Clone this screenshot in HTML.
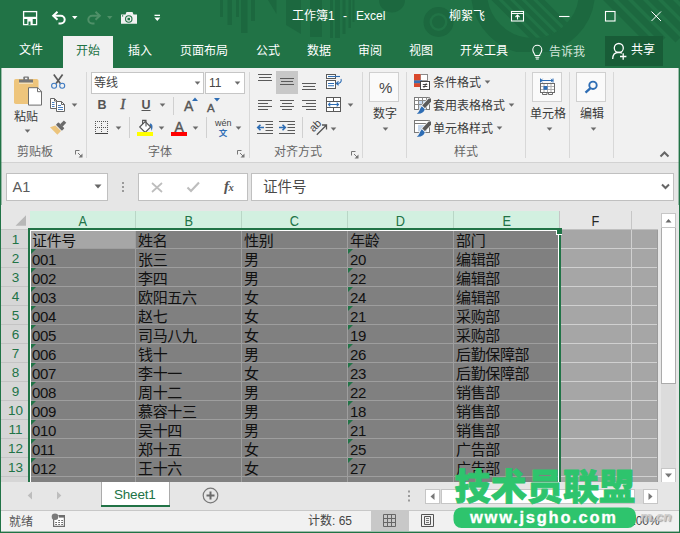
<!DOCTYPE html>
<html lang="zh-CN">
<head>
<meta charset="utf-8">
<title>工作簿1 - Excel</title>
<style>
html,body{margin:0;padding:0}
body{width:680px;height:533px;overflow:hidden;position:relative;background:#e6e6e6;
 font-family:"Liberation Sans","Noto Sans CJK SC",sans-serif;font-size:12px;color:#262626}
.abs{position:absolute}
#win{position:absolute;left:0;top:0;width:680px;height:533px;overflow:hidden}
.tt{position:absolute;color:#fff;font-size:12px;line-height:16px;white-space:nowrap}
.tab{position:absolute;top:36px;height:30px;line-height:28px;color:#fff;font-size:12px;white-space:nowrap}
.ch{font-size:14.500px;line-height:20px;text-align:center}
.ch span{display:inline-block;transform:scaleX(.88)}
.rh span{display:inline-block;transform:translateX(1px)}
.rh{font-size:13.500px;line-height:20px;text-align:center;color:#217346;background:#d6d6d6;overflow:hidden}
.ct{font-size:15px;line-height:19px;white-space:nowrap;color:#111;letter-spacing:-0.35px}
.rl{position:absolute;font-size:12px;line-height:16px;white-space:nowrap;color:#333}
.gl{position:absolute;font-size:12px;line-height:16px;white-space:nowrap;color:#666;text-align:center}
.sep{position:absolute;width:1px;background:#d8d8d8}
</style>
</head>
<body>
<div id="win">
<!-- title bar -->
<div class="abs" style="left:0;top:0;width:680px;height:68px;background:#217346"></div>
<svg class="abs" style="left:0;top:0" width="680" height="66" viewBox="0 0 680 66">
 <defs><clipPath id="tb"><rect x="0" y="0" width="680" height="52"/></clipPath>
 <clipPath id="uin"><circle cx="533" cy="-8" r="46"/></clipPath></defs>
 <g fill="#1c683f">
  <rect x="220" y="0" width="3" height="17"/><rect x="227.500" y="0" width="4.500" height="25"/>
  <rect x="236" y="0" width="3" height="17"/><rect x="241" y="0" width="6.500" height="33"/>
  <rect x="251" y="0" width="4" height="21"/>
  <path d="M268 0h8.500v14z"/>
  <path d="M286 0h15v34l-15-9z"/>
  <rect x="310" y="0" width="12" height="37"/>
  <rect x="330" y="0" width="3" height="38"/><rect x="335" y="0" width="5" height="38"/>
  <rect x="342.500" y="0" width="3" height="34"/><rect x="348.500" y="0" width="2.500" height="28"/><rect x="352.500" y="0" width="2" height="22"/>
  <path d="M379 0a13 12.500 0 0 0 26 0z"/>
 </g>
 <g fill="none" stroke="#1c683f" clip-path="url(#tb)">
  <circle cx="438.500" cy="22" r="6.500" fill="#1c683f" stroke="none"/>
  <circle cx="438.500" cy="22" r="12" stroke-width="6"/>
  <circle cx="533" cy="-8" r="54" stroke-width="16"/>
  <g stroke-width="5" clip-path="url(#uin)">
   <path d="M485 -10L555 60"/><path d="M496.500 -10L566.500 60"/><path d="M508 -10L578 60"/><path d="M519.500 -10L589.500 60"/><path d="M531 -10L601 60"/>
  </g>
  <g stroke-width="7">
   <path d="M600 -8L648 40"/><path d="M615 -8L663 40"/><path d="M630 -8L678 40"/><path d="M645 -8L693 40"/><path d="M660 -8L708 40"/><path d="M675 -8L723 40"/>
  </g>
 </g>
</svg>
<!-- QAT icons -->
<svg class="abs" style="left:0;top:0" width="170" height="36" viewBox="0 0 170 36">
 <rect x="23.600" y="11.600" width="13" height="13" fill="none" stroke="#fff" stroke-width="1.300"/>
 <rect x="24" y="16.800" width="12.500" height="2.200" fill="#fff"/>
 <rect x="27.300" y="19" width="5.400" height="5.500" fill="#fff"/>
 <rect x="28.500" y="21.500" width="2" height="3.500" fill="#217346"/>
 <path d="M57.500 11.700l-4.300 4 4.300 4" fill="none" stroke="#fff" stroke-width="2"/>
 <path d="M53.500 15.700h7.300a3.900 3.900 0 0 1 0 7.800h-2.300" fill="none" stroke="#fff" stroke-width="2"/>
 <path d="M72 16h5.500l-2.750 3.200z" fill="#fff"/>
 <path d="M95.500 11.700l4.300 4-4.300 4" fill="none" stroke="#4f9068" stroke-width="2"/>
 <path d="M99.500 15.700h-7.300a3.900 3.900 0 0 0 0 7.800h2.300" fill="none" stroke="#4f9068" stroke-width="2"/>
 <path d="M107 16h5.500l-2.750 3.200z" fill="#4f9068"/>
 <path d="M121 14.500h4.500l1-2.500h6l1 2.500h3.500v9.300h-16z" fill="#f1f1f1"/>
 <circle cx="128.750" cy="19" r="3.200" fill="none" stroke="#217346" stroke-width="1.100"/>
 <rect x="127.500" y="17.800" width="2.500" height="2.500" fill="#217346"/>
 <rect x="122" y="15.300" width="1.200" height="1.200" fill="#217346"/>
 <rect x="154.500" y="14.700" width="5.500" height="1.300" fill="#fff"/>
 <path d="M154.300 17.600h6l-3 3.500z" fill="#fff"/>
</svg>
<div class="tt" style="left:292px;top:8px">工作簿1</div>
<div class="tt" style="left:343px;top:8px">-</div>
<div class="tt" style="left:356px;top:8px">Excel</div>
<div class="tt" style="left:449px;top:8px">柳絮飞</div>
<svg class="abs" style="left:508px;top:6px" width="172" height="22" viewBox="0 0 172 22" fill="none" stroke="#fff" stroke-width="1.100">
 <rect x="3.500" y="5.500" width="12" height="9.500"/><path d="M3.500 7.500h12M9.500 13.500v-4M7.500 11l2-2 2 2"/>
 <path d="M51 10.500h10.500"/>
 <rect x="97.500" y="5.500" width="9.500" height="9.500"/>
 <path d="M143.500 5.500l9.500 9.500M153 5.500l-9.500 9.500" stroke-width="1"/>
</svg>
<!-- tabs -->
<div class="abs" style="left:63px;top:36px;width:50px;height:32px;background:#f1f1f1"></div>
<div class="abs" style="left:605px;top:36px;width:58px;height:30px;background:#185c37"></div>
<div class="tab" style="left:19px">文件</div>
<div class="tab" style="left:76px;top:37px;color:#217346">开始</div>
<div class="tab" style="left:128px;top:37px">插入</div>
<div class="tab" style="left:180px;top:37px">页面布局</div>
<div class="tab" style="left:256px;top:37px">公式</div>
<div class="tab" style="left:307px;top:37px">数据</div>
<div class="tab" style="left:358px;top:37px">审阅</div>
<div class="tab" style="left:409px;top:37px">视图</div>
<div class="tab" style="left:460px;top:37px">开发工具</div>
<svg class="abs" style="left:530px;top:42px" width="16" height="20" viewBox="530 42 16 20" fill="none" stroke="#fff" stroke-width="1.100">
 <path d="M535 55.500c0-1.700-2.200-2.800-2.200-5.700a4.500 4.500 0 0 1 9 0c0 2.900-2.200 4-2.200 5.700z"/><path d="M535.300 57.300h4M535.800 59h3"/>
</svg>
<div class="tab" style="left:549px;top:38px;color:#d5e6dc">告诉我</div>
<svg class="abs" style="left:608px;top:40px" width="22" height="24" viewBox="608 40 22 24" fill="none" stroke="#fff" stroke-width="1.300">
 <circle cx="618.800" cy="48" r="4.500"/><path d="M612.700 59c0-4.300 2.300-6.700 6-6.700 1.200 0 2.300.3 3.200.9"/><path d="M623.200 53.300v6.400M620 56.500h6.400"/>
</svg>
<div class="tab" style="left:631px">共享</div>
<!-- ribbon -->
<div class="abs" style="left:1px;top:68px;width:678px;height:94px;background:#f1f1f1"></div>
<div class="abs" style="left:1px;top:162px;width:678px;height:1px;background:#d2d2d2"></div>
<div class="abs" style="left:0;top:66px;width:1px;height:467px;background:#217346"></div><div class="abs" style="left:1px;top:66px;width:1px;height:467px;background:#217346;opacity:.4"></div>
<div class="abs" style="left:679px;top:66px;width:1px;height:467px;background:#217346"></div><div class="abs" style="left:678px;top:66px;width:1px;height:467px;background:#217346;opacity:.4"></div>

<!-- group separators -->
<div class="sep" style="left:86px;top:72px;height:86px"></div>
<div class="sep" style="left:249px;top:72px;height:86px"></div>
<div class="sep" style="left:362px;top:72px;height:86px"></div>
<div class="sep" style="left:406px;top:72px;height:86px"></div>
<div class="sep" style="left:525px;top:72px;height:86px"></div>
<div class="sep" style="left:569px;top:72px;height:86px"></div>
<div class="sep" style="left:613px;top:72px;height:86px"></div>
<!-- clipboard group -->
<svg class="abs" style="left:10px;top:72px" width="36" height="38" viewBox="10 72 36 38">
 <rect x="14" y="79" width="24.500" height="25" rx="1.800" fill="#eec57c"/>
 <rect x="19" y="79.500" width="14" height="3.200" fill="#777"/>
 <rect x="23.300" y="76.400" width="5.700" height="4" rx="1" fill="#777"/>
 <rect x="25" y="77.700" width="2.300" height="1.500" fill="#f1f1f1"/>
 <rect x="19" y="82.700" width="14" height="1" fill="#f7ead0"/>
 <path d="M28.500 87.700h9.300l3.700 3.700v13.700h-13z" fill="#fff" stroke="#6e6e6e" stroke-width="1"/>
 <path d="M37.500 87.700v4h4" fill="none" stroke="#6e6e6e" stroke-width="1"/>
</svg>
<div class="rl" style="left:14px;top:109px;font-size:12px;color:#3a3a3a">粘贴</div>
<svg class="abs" style="left:23.500px;top:128.500px" width="8" height="5"><path d="M0.700 0.500h5.600l-2.800 3.300z" fill="#6a6a6a"/></svg>
<svg class="abs" style="left:48px;top:72px" width="22" height="20" viewBox="48 72 22 20" fill="none">
 <path d="M53.800 74.500l6.500 9M62.600 74.500l-6.500 9" stroke="#5a5a5a" stroke-width="1.700"/>
 <circle cx="54.100" cy="85.800" r="2.500" stroke="#3d7ac2" stroke-width="1.100"/><circle cx="62.200" cy="85.800" r="2.500" stroke="#3d7ac2" stroke-width="1.100"/>
</svg>
<svg class="abs" style="left:48px;top:95px" width="20" height="20" viewBox="48 95 20 20" fill="#fff" stroke="#666" stroke-width="1">
 <path d="M50.500 98.500h4l2.500 2.500v7.500h-6.500z"/><path d="M54.500 98.500v2.500h2.500" fill="none"/><path d="M52 102.500h2.500M52 104.500h2.500M52 106.500h2.500" stroke="#3572b8" stroke-width=".9"/>
 <path d="M56.500 101.500h5l3 3v7h-8z"/><path d="M61.500 101.500v3h3" fill="none"/><path d="M58 105.500h3M58 107.500h5M58 109.500h5" stroke="#3572b8" stroke-width=".9"/>
</svg>
<svg class="abs" style="left:71px;top:103px" width="8" height="5"><path d="M0.700 0.500h5.600l-2.800 3.300z" fill="#6a6a6a"/></svg>
<svg class="abs" style="left:46px;top:116px" width="24" height="22" viewBox="46 116 24 22">
 <g transform="translate(60.200 126.500) rotate(-45)">
  <rect x="1.500" y="-1.700" width="5.400" height="3.400" fill="#6a6a6a"/>
  <rect x="-1.900" y="-4.300" width="3.700" height="8.600" rx=".8" fill="#6a6a6a"/>
  <path d="M-2.700 -4.200L-2.700 3.800L-7.800 3.800L-7.800 -6.600Z" fill="#ecc47c"/>
 </g>
</svg>
<div class="gl" style="left:17px;top:144px">剪贴板</div>
<svg class="abs" style="left:75px;top:150px" width="8" height="8" fill="none" stroke="#777" stroke-width="1"><path d="M.5 4.500v-4h4M3 3l3 3"/><path d="M7.500 3.500v4h-4z" fill="#777" stroke="none"/></svg>
<!-- font group -->
<div class="abs" style="left:91px;top:72px;width:113px;height:22px;background:#fff;border:1px solid #c6c6c6;box-sizing:border-box"></div>
<div class="rl" style="left:94px;top:75px;font-size:12px;color:#444">等线</div>
<svg class="abs" style="left:194px;top:81px" width="8" height="5"><path d="M0.700 0.500h5.600l-2.800 3.300z" fill="#6a6a6a"/></svg>
<div class="abs" style="left:205px;top:72px;width:40px;height:22px;background:#fff;border:1px solid #c6c6c6;box-sizing:border-box"></div>
<div class="rl" style="left:209px;top:75px;font-size:12px;color:#444">11</div>
<svg class="abs" style="left:234px;top:81px" width="8" height="5"><path d="M0.700 0.500h5.600l-2.800 3.300z" fill="#6a6a6a"/></svg>
<div class="rl" style="left:97.500px;top:97px;font-size:12.500px;font-weight:bold;color:#555">B</div>
<div class="rl" style="left:120.500px;top:96.500px;font-size:14px;font-style:italic;color:#555;-webkit-text-stroke:.5px #555;font-family:'Liberation Serif',serif">I</div>
<div class="rl" style="left:141.500px;top:97px;font-size:12.500px;font-weight:bold;color:#555;text-decoration:underline">U</div>
<svg class="abs" style="left:159px;top:103px" width="8" height="5"><path d="M0.700 0.500h5.600l-2.800 3.300z" fill="#6a6a6a"/></svg>
<div class="sep" style="left:173px;top:97px;height:18px;background:#d0d0d0"></div>
<div class="rl" style="left:184px;top:98px;font-size:14px;color:#555;-webkit-text-stroke:.4px #555">A</div>
<svg class="abs" style="left:192px;top:97px" width="7" height="4"><path d="M0 4h6l-3-3.500z" fill="#2e6db4"/></svg>
<div class="rl" style="left:207px;top:99.500px;font-size:11.500px;color:#555;-webkit-text-stroke:.4px #555">A</div>
<svg class="abs" style="left:214px;top:98px" width="7" height="4"><path d="M0 0h6l-3 3.500z" fill="#2e6db4"/></svg>
<svg class="abs" style="left:95px;top:121px" width="14" height="14" viewBox="0 0 14 14" fill="none" shape-rendering="crispEdges"><path d="M0 .5h13M0 6.500h13M.5 0v13M6.500 0v13M12.500 0v13" stroke="#555" stroke-width="1" stroke-dasharray="1 1"/><path d="M0 12.500h13" stroke="#444" stroke-width="1"/></svg>
<svg class="abs" style="left:115px;top:126px" width="8" height="5"><path d="M0.700 0.500h5.600l-2.800 3.300z" fill="#6a6a6a"/></svg>
<div class="sep" style="left:129px;top:117px;height:21px;background:#d0d0d0"></div>
<svg class="abs" style="left:136px;top:117px" width="18" height="20" viewBox="136 117 18 20">
 <path d="M150.300 123.300c2.300.8 3 3.500 1.300 7.700-.3-2.400-1-3.800-2.600-4.800z" fill="#3572b8"/>
 <path d="M139.700 127l5.500-5.500 5.500 5.500-5.500 5.500z" fill="#fff" stroke="#555" stroke-width="1.100"/>
 <path d="M142.600 124v-3.600h3.400v6" fill="none" stroke="#555" stroke-width="1.100"/>
 <rect x="137" y="132" width="16" height="4" fill="#ffff00"/>
</svg>
<svg class="abs" style="left:158px;top:126px" width="8" height="5"><path d="M0.700 0.500h5.600l-2.800 3.300z" fill="#6a6a6a"/></svg>
<div class="rl" style="left:174.500px;top:118.500px;font-size:14px;color:#555;-webkit-text-stroke:.4px #555">A</div>
<div class="abs" style="left:171px;top:132px;width:16px;height:4px;background:#ff0000"></div>
<svg class="abs" style="left:192px;top:126px" width="8" height="5"><path d="M0.700 0.500h5.600l-2.800 3.300z" fill="#6a6a6a"/></svg>
<div class="sep" style="left:206px;top:117px;height:21px;background:#d0d0d0"></div>
<div class="rl" style="left:215px;top:118px;font-size:9px;line-height:11px;color:#444">wén</div>
<div class="rl" style="left:218.700px;top:126.500px;font-size:8.500px;line-height:12px;color:#2e6db4;font-weight:bold">文</div>
<svg class="abs" style="left:235px;top:126px" width="8" height="5"><path d="M0.700 0.500h5.600l-2.800 3.300z" fill="#6a6a6a"/></svg>
<div class="gl" style="left:148px;top:144px">字体</div>
<svg class="abs" style="left:237px;top:150px" width="8" height="8" fill="none" stroke="#777" stroke-width="1"><path d="M.5 4.500v-4h4M3 3l3 3"/><path d="M7.500 3.500v4h-4z" fill="#777" stroke="none"/></svg>
<!-- alignment group -->
<div class="abs" style="left:276px;top:71px;width:22px;height:23px;background:#c8c8c8"></div>
<svg class="abs" style="left:254px;top:68px" width="50" height="72" viewBox="254 68 50 72" fill="none" stroke="#5a5a5a" stroke-width="1">
 <path d="M258 74.500h14M259 77.500h12M258 80.500h14"/>
 <path d="M280 78.500h14M281 81.500h12M280 84.500h14"/>
 <path d="M302 83.500h14M303 86.500h12M302 89.500h14"/>
</svg>
<svg class="abs" style="left:254px;top:68px" width="70" height="72" viewBox="254 68 70 72" fill="none" stroke="#5a5a5a" stroke-width="1">
 <path d="M302 83.500h14M303 86.500h12M302 89.500h14"/>
 <path d="M258 100.500h14M258 103.500h10M258 106.500h14M258 109.500h10"/>
 <path d="M280 100.500h14M282 103.500h10M280 106.500h14M282 109.500h10"/>
 <path d="M302 100.500h14M306 103.500h10M302 106.500h14M306 109.500h10"/>
 <path d="M257 121.500h16M265.500 124.500h7.500M265.500 127.500h7.500M265.500 130.500h7.500M257 133.500h16"/>
 <path d="M279 121.500h16M287.500 124.500h7.500M287.500 127.500h7.500M287.500 130.500h7.500M279 133.500h16"/>
 <path d="M264 127.500h-6M260.500 124.700l-2.800 2.800 2.800 2.800" stroke="#2e6db4" stroke-width="1.600"/>
 <path d="M279 127.500h6M282.500 124.700l2.800 2.800-2.800 2.800" stroke="#2e6db4" stroke-width="1.600"/>
</svg>
<div class="sep" style="left:302px;top:117px;height:21px;background:#d0d0d0"></div>
<svg class="abs" style="left:300px;top:66px" width="60" height="76" viewBox="300 66 60 76" fill="none">
 <g stroke="#5a5a5a" stroke-width="1">
  <rect x="326.500" y="74.500" width="9" height="4" fill="#fff"/><rect x="326.500" y="80.500" width="9" height="8" fill="#fff"/>
  <rect x="326.500" y="97.500" width="14" height="14" fill="#fff"/><path d="M326.500 101.500h14M326.500 107.500h14M333.500 97.500v4M333.500 107.500v4"/>
 </g>
 <g stroke="#2e6db4" stroke-width="1.100">
  <path d="M328 76.500h12"/><path d="M328 83.500h6M328 85.800h6"/>
  <path d="M341 79c1 2.500-1 4.800-4.500 4.500"/><path d="M338.500 81.300l-2.300 2.200 2.500 1.800"/>
  <path d="M328.500 104.500h10M330.300 102.700l-1.800 1.800 1.800 1.800M336.700 102.700l1.800 1.800-1.800 1.800"/>
 </g>
 <path d="M316.800 134.800l9.500-9.500M322 125h4.500v4.500" stroke="#555" stroke-width="1.300"/>
 <text transform="translate(313.500 132.500) rotate(-45)" font-family="Liberation Sans, sans-serif" font-size="11" fill="#444">ab</text>
</svg>
<svg class="abs" style="left:330px;top:127px" width="8" height="5"><path d="M0.700 0.500h5.600l-2.800 3.300z" fill="#6a6a6a"/></svg>
<svg class="abs" style="left:347px;top:103px" width="8" height="5"><path d="M0.700 0.500h5.600l-2.800 3.300z" fill="#6a6a6a"/></svg>
<div class="gl" style="left:274px;top:144px">对齐方式</div>
<svg class="abs" style="left:351px;top:150.500px" width="8" height="8" fill="none" stroke="#777" stroke-width="1"><path d="M.5 4.500v-4h4M3 3l3 3"/><path d="M7.500 3.500v4h-4z" fill="#777" stroke="none"/></svg>
<!-- number group -->
<div class="abs" style="left:369px;top:72px;width:30px;height:30px;background:#fafafa;border:1px solid #d0d0d0;box-sizing:border-box"></div>
<div class="rl" style="left:379px;top:80px;font-size:15px;color:#444">%</div>
<div class="rl" style="left:373px;top:106px;font-size:12px;color:#3a3a3a">数字</div>
<svg class="abs" style="left:382px;top:127px" width="8" height="5"><path d="M0.700 0.500h5.600l-2.800 3.300z" fill="#6a6a6a"/></svg>
<!-- styles group -->
<svg class="abs" style="left:410px;top:70px" width="24" height="68" viewBox="410 70 24 68">
 <!-- conditional formatting -->
 <rect x="414.500" y="74.500" width="13" height="12" fill="#fff" stroke="#8a8a8a"/>
 <path d="M420.500 74.500v12M414.500 80.500h13M414.500 83.500h13" stroke="#a0a0a0" fill="none"/>
 <rect x="414" y="74" width="6.500" height="6.500" fill="#d9482b"/>
 <rect x="414" y="80.500" width="8" height="2.800" fill="#3572b8"/>
 <rect x="414" y="83.300" width="6.500" height="3.700" fill="#d9482b"/>
 <rect x="420.500" y="81.500" width="9" height="8" fill="#fff" stroke="#444"/>
 <path d="M422.800 84.500h4.500M422.800 86.500h4.500M426.300 83.300l-2.500 4.500" stroke="#333" stroke-width=".9" fill="none"/>
 <!-- format as table -->
 <rect x="414.500" y="97.500" width="15" height="12" fill="#fff" stroke="#7a7a7a"/>
 <rect x="418" y="101" width="9" height="8" fill="#c6d8ee"/>
 <path d="M414.500 100.500h15M414.500 104.500h15M418.500 97.500v12M422.500 97.500v12M426.500 97.500v12" stroke="#8a8a8a" fill="none"/>
 <path d="M431 98.500v3.200l-6.200 6.500-2.600-2.600 6.600-7.100z" fill="#f1f1f1" stroke="#f1f1f1" stroke-width="1.500"/><path d="M431 98.500v3.200l-6.200 6.500-2.600-2.600 6.600-7.100z" fill="#5a5a5a"/>
 <path d="M421.800 106.200l3 3c-.8 3.600-4.600 5-8 4.300 2.500-1 2.600-4.300 5-7.300z" fill="#f1f1f1" stroke="#f1f1f1" stroke-width="1.500"/><path d="M421.800 106.200l3 3c-.8 3.600-4.600 5-8 4.300 2.500-1 2.600-4.300 5-7.300z" fill="#2e6db4"/>
 <!-- cell styles -->
 <rect x="414.500" y="120.500" width="15" height="12" fill="#fff" stroke="#7a7a7a"/>
 <path d="M414.500 123.500h15" stroke="#7a7a7a" fill="none"/>
 <rect x="418" y="125" width="9" height="6.500" fill="#c6d8ee"/>
 <path d="M431 121.500v3.200l-6.200 6.500-2.600-2.600 6.600-7.100z" fill="#f1f1f1" stroke="#f1f1f1" stroke-width="1.500"/><path d="M431 121.500v3.200l-6.200 6.500-2.600-2.600 6.600-7.100z" fill="#5a5a5a"/>
 <path d="M421.800 129.200l3 3c-.8 3.600-4.600 5-8 4.300 2.500-1 2.600-4.300 5-7.300z" fill="#f1f1f1" stroke="#f1f1f1" stroke-width="1.500"/><path d="M421.800 129.200l3 3c-.8 3.600-4.600 5-8 4.300 2.500-1 2.600-4.300 5-7.300z" fill="#2e6db4"/>
</svg>
<div class="rl" style="left:433px;top:75px;color:#3a3a3a">条件格式</div>
<svg class="abs" style="left:484px;top:80px" width="8" height="5"><path d="M0.700 0.500h5.600l-2.800 3.300z" fill="#6a6a6a"/></svg>
<div class="rl" style="left:433px;top:98px;color:#3a3a3a">套用表格格式</div>
<svg class="abs" style="left:508px;top:103px" width="8" height="5"><path d="M0.700 0.500h5.600l-2.800 3.300z" fill="#6a6a6a"/></svg>
<div class="rl" style="left:433px;top:121px;color:#3a3a3a">单元格样式</div>
<svg class="abs" style="left:496px;top:126px" width="8" height="5"><path d="M0.700 0.500h5.600l-2.800 3.300z" fill="#6a6a6a"/></svg>
<div class="gl" style="left:454px;top:144px">样式</div>
<!-- cells group -->
<div class="abs" style="left:532px;top:72px;width:30px;height:30px;background:#fafafa;border:1px solid #d0d0d0;box-sizing:border-box"></div>
<svg class="abs" style="left:536px;top:76px" width="22" height="22" viewBox="536 76 22 22" fill="none">
 <path d="M540.500 80.500h12.500M540.500 78.500v4M553 78.500v4" stroke="#2e6db4" stroke-width="1"/>
 <path d="M542.500 78.800l-1.700 1.700 1.700 1.700M551 78.800l1.700 1.700-1.700 1.700" stroke="#2e6db4" stroke-width="1"/>
 <rect x="540.500" y="83.500" width="14" height="9" fill="#fff" stroke="#6a6a6a"/>
 <path d="M540.500 86.500h14M540.500 89.500h14M544 83.500v9M547.500 83.500v9M551 83.500v9" stroke="#b0b0b0"/>
 <rect x="540.500" y="83.500" width="14" height="9" stroke="#6a6a6a"/>
 <rect x="543.500" y="86" width="4" height="3.800" fill="#2e6db4"/>
 <path d="M542.500 92.500v2h4.500v-2M548.500 92.500v2h4v-2" stroke="#6a6a6a"/>
</svg>
<div class="rl" style="left:530px;top:106px;font-size:12px;color:#3a3a3a">单元格</div>
<svg class="abs" style="left:546px;top:127px" width="8" height="5"><path d="M0.700 0.500h5.600l-2.800 3.300z" fill="#6a6a6a"/></svg>
<!-- edit group -->
<div class="abs" style="left:576px;top:72px;width:30px;height:30px;background:#fafafa;border:1px solid #d0d0d0;box-sizing:border-box"></div>
<svg class="abs" style="left:582px;top:78px" width="18" height="18" viewBox="582 78 18 18" fill="none" stroke="#2e6db4">
 <circle cx="593" cy="85.300" r="3.700" stroke-width="1.900"/><path d="M590.200 88.300l-4.700 4.300" stroke-width="2.300"/>
</svg>
<div class="rl" style="left:580px;top:106px;font-size:12px;color:#3a3a3a">编辑</div>
<svg class="abs" style="left:590px;top:127px" width="8" height="5"><path d="M0.700 0.500h5.600l-2.800 3.300z" fill="#6a6a6a"/></svg>
<svg class="abs" style="left:659px;top:150px" width="12" height="8" fill="none" stroke="#666" stroke-width="2"><path d="M1.500 6.500l4-4 4 4"/></svg>
<!-- formula bar -->
<div class="abs" style="left:6px;top:173px;width:102px;height:28px;background:#fff;border:1px solid #c0c0c0;box-sizing:border-box"></div>
<div class="rl" style="left:12.500px;top:179px;font-size:14.500px;color:#5a5a5a">A1</div>
<svg class="abs" style="left:94px;top:184px" width="9" height="6"><path d="M0.500 0.500h7l-3.500 4z" fill="#666"/></svg>
<svg class="abs" style="left:121px;top:179px" width="4" height="16" fill="#9a9a9a"><rect x="1" y="3" width="2" height="2"/><rect x="1" y="7" width="2" height="2"/><rect x="1" y="11" width="2" height="2"/></svg>
<div class="abs" style="left:138px;top:173px;width:110px;height:28px;background:#fff;border:1px solid #c0c0c0;box-sizing:border-box"></div>
<svg class="abs" style="left:150px;top:180px" width="14" height="14" fill="none" stroke="#bdbdbd" stroke-width="1.700"><path d="M2 3l10 9M12 3l-10 9"/></svg>
<svg class="abs" style="left:185px;top:180px" width="16" height="14" fill="none" stroke="#bdbdbd" stroke-width="2.100"><path d="M2.500 7.500l3.500 3.500 8-8.500"/></svg>
<div class="rl" style="left:224px;top:178px;font-size:15px;color:#555;font-family:'Liberation Serif',serif;font-style:italic;font-weight:bold;letter-spacing:-0.5px">f<span style="font-size:10.500px">x</span></div>
<div class="abs" style="left:251px;top:173px;width:423px;height:28px;background:#fff;border:1px solid #c0c0c0;box-sizing:border-box"></div>
<div class="rl" style="left:263px;top:179px;font-size:14.500px;color:#4a4a4a">证件号</div>
<svg class="abs" style="left:661px;top:183px" width="10" height="7" fill="none" stroke="#666" stroke-width="2"><path d="M1 1.500l3.500 3.500 3.500-3.500"/></svg>
<div id="grid">
<div class="abs" style="left:1px;top:205px;width:678px;height:278px;background:#e6e6e6"></div>
<div class="abs" style="left:30px;top:230px;width:628px;height:252px;background:#a6a6a6"></div>
<div class="abs" style="left:657px;top:230px;width:1px;height:252px;background:#9a9a9a"></div>
<div class="abs" style="left:30px;top:230px;width:529px;height:252px;background:#808080"></div>
<div class="abs" style="left:30px;top:230px;width:105px;height:18px;background:#a6a6a6"></div>
<div class="abs" style="left:30px;top:248px;width:529px;height:1px;background:#9e9e9e"></div>
<div class="abs" style="left:561px;top:248px;width:96px;height:1px;background:#d0d0d0"></div>
<div class="abs" style="left:30px;top:267px;width:529px;height:1px;background:#9e9e9e"></div>
<div class="abs" style="left:561px;top:267px;width:96px;height:1px;background:#d0d0d0"></div>
<div class="abs" style="left:30px;top:286px;width:529px;height:1px;background:#9e9e9e"></div>
<div class="abs" style="left:561px;top:286px;width:96px;height:1px;background:#d0d0d0"></div>
<div class="abs" style="left:30px;top:305px;width:529px;height:1px;background:#9e9e9e"></div>
<div class="abs" style="left:561px;top:305px;width:96px;height:1px;background:#d0d0d0"></div>
<div class="abs" style="left:30px;top:324px;width:529px;height:1px;background:#9e9e9e"></div>
<div class="abs" style="left:561px;top:324px;width:96px;height:1px;background:#d0d0d0"></div>
<div class="abs" style="left:30px;top:343px;width:529px;height:1px;background:#9e9e9e"></div>
<div class="abs" style="left:561px;top:343px;width:96px;height:1px;background:#d0d0d0"></div>
<div class="abs" style="left:30px;top:362px;width:529px;height:1px;background:#9e9e9e"></div>
<div class="abs" style="left:561px;top:362px;width:96px;height:1px;background:#d0d0d0"></div>
<div class="abs" style="left:30px;top:381px;width:529px;height:1px;background:#9e9e9e"></div>
<div class="abs" style="left:561px;top:381px;width:96px;height:1px;background:#d0d0d0"></div>
<div class="abs" style="left:30px;top:400px;width:529px;height:1px;background:#9e9e9e"></div>
<div class="abs" style="left:561px;top:400px;width:96px;height:1px;background:#d0d0d0"></div>
<div class="abs" style="left:30px;top:419px;width:529px;height:1px;background:#9e9e9e"></div>
<div class="abs" style="left:561px;top:419px;width:96px;height:1px;background:#d0d0d0"></div>
<div class="abs" style="left:30px;top:438px;width:529px;height:1px;background:#9e9e9e"></div>
<div class="abs" style="left:561px;top:438px;width:96px;height:1px;background:#d0d0d0"></div>
<div class="abs" style="left:30px;top:457px;width:529px;height:1px;background:#9e9e9e"></div>
<div class="abs" style="left:561px;top:457px;width:96px;height:1px;background:#d0d0d0"></div>
<div class="abs" style="left:30px;top:476px;width:529px;height:1px;background:#9e9e9e"></div>
<div class="abs" style="left:561px;top:476px;width:96px;height:1px;background:#d0d0d0"></div>
<div class="abs" style="left:135px;top:230px;width:1px;height:252px;background:#9e9e9e"></div>
<div class="abs" style="left:241px;top:230px;width:1px;height:252px;background:#9e9e9e"></div>
<div class="abs" style="left:347px;top:230px;width:1px;height:252px;background:#9e9e9e"></div>
<div class="abs" style="left:453px;top:230px;width:1px;height:252px;background:#9e9e9e"></div>
<div class="abs" style="left:631px;top:230px;width:1px;height:252px;background:#d0d0d0"></div>
<div class="abs ch" style="left:30px;top:211px;width:105px;height:18px;background:#d2f0e0;color:#217346"><span>A</span></div>
<div class="abs" style="left:135px;top:211px;width:1px;height:18px;background:#b9d6c6"></div>
<div class="abs ch" style="left:136px;top:211px;width:105px;height:18px;background:#d2f0e0;color:#217346"><span>B</span></div>
<div class="abs" style="left:241px;top:211px;width:1px;height:18px;background:#b9d6c6"></div>
<div class="abs ch" style="left:242px;top:211px;width:105px;height:18px;background:#d2f0e0;color:#217346"><span>C</span></div>
<div class="abs" style="left:347px;top:211px;width:1px;height:18px;background:#b9d6c6"></div>
<div class="abs ch" style="left:348px;top:211px;width:105px;height:18px;background:#d2f0e0;color:#217346"><span>D</span></div>
<div class="abs" style="left:453px;top:211px;width:1px;height:18px;background:#b9d6c6"></div>
<div class="abs ch" style="left:454px;top:211px;width:105px;height:18px;background:#d2f0e0;color:#217346"><span>E</span></div>
<div class="abs" style="left:559px;top:211px;width:1px;height:18px;background:#c6c6c6"></div>
<div class="abs ch" style="left:560px;top:211px;width:71px;height:18px;background:#e6e6e6;color:#262626"><span>F</span></div>
<div class="abs" style="left:631px;top:211px;width:1px;height:18px;background:#c6c6c6"></div>
<div class="abs" style="left:561px;top:229px;width:97px;height:1px;background:#c0c0c0"></div>
<div class="abs" style="left:1px;top:229px;width:27px;height:1px;background:#c8c8c8"></div>
<svg class="abs" style="left:1px;top:211px" width="28" height="18"><path d="M14.500 14.700H25V4.200Z" fill="#b8b8b8"/></svg>
<div class="abs rh" style="left:1px;top:230px;width:27px;height:18px"><span>1</span></div>
<div class="abs" style="left:1px;top:248px;width:27px;height:1px;background:#c4c4c4"></div>
<div class="abs rh" style="left:1px;top:249px;width:27px;height:18px"><span>2</span></div>
<div class="abs" style="left:1px;top:267px;width:27px;height:1px;background:#c4c4c4"></div>
<div class="abs rh" style="left:1px;top:268px;width:27px;height:18px"><span>3</span></div>
<div class="abs" style="left:1px;top:286px;width:27px;height:1px;background:#c4c4c4"></div>
<div class="abs rh" style="left:1px;top:287px;width:27px;height:18px"><span>4</span></div>
<div class="abs" style="left:1px;top:305px;width:27px;height:1px;background:#c4c4c4"></div>
<div class="abs rh" style="left:1px;top:306px;width:27px;height:18px"><span>5</span></div>
<div class="abs" style="left:1px;top:324px;width:27px;height:1px;background:#c4c4c4"></div>
<div class="abs rh" style="left:1px;top:325px;width:27px;height:18px"><span>6</span></div>
<div class="abs" style="left:1px;top:343px;width:27px;height:1px;background:#c4c4c4"></div>
<div class="abs rh" style="left:1px;top:344px;width:27px;height:18px"><span>7</span></div>
<div class="abs" style="left:1px;top:362px;width:27px;height:1px;background:#c4c4c4"></div>
<div class="abs rh" style="left:1px;top:363px;width:27px;height:18px"><span>8</span></div>
<div class="abs" style="left:1px;top:381px;width:27px;height:1px;background:#c4c4c4"></div>
<div class="abs rh" style="left:1px;top:382px;width:27px;height:18px"><span>9</span></div>
<div class="abs" style="left:1px;top:400px;width:27px;height:1px;background:#c4c4c4"></div>
<div class="abs rh" style="left:1px;top:401px;width:27px;height:18px"><span>10</span></div>
<div class="abs" style="left:1px;top:419px;width:27px;height:1px;background:#c4c4c4"></div>
<div class="abs rh" style="left:1px;top:420px;width:27px;height:18px"><span>11</span></div>
<div class="abs" style="left:1px;top:438px;width:27px;height:1px;background:#c4c4c4"></div>
<div class="abs rh" style="left:1px;top:439px;width:27px;height:18px"><span>12</span></div>
<div class="abs" style="left:1px;top:457px;width:27px;height:1px;background:#c4c4c4"></div>
<div class="abs rh" style="left:1px;top:458px;width:27px;height:18px"><span>13</span></div>
<div class="abs" style="left:1px;top:476px;width:27px;height:1px;background:#c4c4c4"></div>
<div class="abs rh" style="left:1px;top:477px;width:27px;height:5px"><span></span></div>
<div class="abs ct" style="left:32px;top:231px">证件号</div>
<div class="abs ct" style="left:138px;top:231px">姓名</div>
<div class="abs ct" style="left:244px;top:231px">性别</div>
<div class="abs ct" style="left:350px;top:231px">年龄</div>
<div class="abs ct" style="left:456px;top:231px">部门</div>
<div class="abs ct" style="left:32px;top:250px">001</div>
<div class="abs ct" style="left:138px;top:250px">张三</div>
<div class="abs ct" style="left:244px;top:250px">男</div>
<div class="abs ct" style="left:350px;top:250px">20</div>
<div class="abs ct" style="left:456px;top:250px">编辑部</div>
<svg class="abs" style="left:31px;top:249px" width="6" height="6"><path d="M0 0H5L0 5Z" fill="#217346"/></svg>
<svg class="abs" style="left:348px;top:249px" width="6" height="6"><path d="M0 0H5L0 5Z" fill="#217346"/></svg>
<div class="abs ct" style="left:32px;top:269px">002</div>
<div class="abs ct" style="left:138px;top:269px">李四</div>
<div class="abs ct" style="left:244px;top:269px">男</div>
<div class="abs ct" style="left:350px;top:269px">22</div>
<div class="abs ct" style="left:456px;top:269px">编辑部</div>
<svg class="abs" style="left:31px;top:268px" width="6" height="6"><path d="M0 0H5L0 5Z" fill="#217346"/></svg>
<svg class="abs" style="left:348px;top:268px" width="6" height="6"><path d="M0 0H5L0 5Z" fill="#217346"/></svg>
<div class="abs ct" style="left:32px;top:288px">003</div>
<div class="abs ct" style="left:138px;top:288px">欧阳五六</div>
<div class="abs ct" style="left:244px;top:288px">女</div>
<div class="abs ct" style="left:350px;top:288px">24</div>
<div class="abs ct" style="left:456px;top:288px">编辑部</div>
<svg class="abs" style="left:31px;top:287px" width="6" height="6"><path d="M0 0H5L0 5Z" fill="#217346"/></svg>
<svg class="abs" style="left:348px;top:287px" width="6" height="6"><path d="M0 0H5L0 5Z" fill="#217346"/></svg>
<div class="abs ct" style="left:32px;top:307px">004</div>
<div class="abs ct" style="left:138px;top:307px">赵七</div>
<div class="abs ct" style="left:244px;top:307px">女</div>
<div class="abs ct" style="left:350px;top:307px">21</div>
<div class="abs ct" style="left:456px;top:307px">采购部</div>
<svg class="abs" style="left:31px;top:306px" width="6" height="6"><path d="M0 0H5L0 5Z" fill="#217346"/></svg>
<svg class="abs" style="left:348px;top:306px" width="6" height="6"><path d="M0 0H5L0 5Z" fill="#217346"/></svg>
<div class="abs ct" style="left:32px;top:326px">005</div>
<div class="abs ct" style="left:138px;top:326px">司马八九</div>
<div class="abs ct" style="left:244px;top:326px">女</div>
<div class="abs ct" style="left:350px;top:326px">19</div>
<div class="abs ct" style="left:456px;top:326px">采购部</div>
<svg class="abs" style="left:31px;top:325px" width="6" height="6"><path d="M0 0H5L0 5Z" fill="#217346"/></svg>
<svg class="abs" style="left:348px;top:325px" width="6" height="6"><path d="M0 0H5L0 5Z" fill="#217346"/></svg>
<div class="abs ct" style="left:32px;top:345px">006</div>
<div class="abs ct" style="left:138px;top:345px">钱十</div>
<div class="abs ct" style="left:244px;top:345px">男</div>
<div class="abs ct" style="left:350px;top:345px">26</div>
<div class="abs ct" style="left:456px;top:345px">后勤保障部</div>
<svg class="abs" style="left:31px;top:344px" width="6" height="6"><path d="M0 0H5L0 5Z" fill="#217346"/></svg>
<svg class="abs" style="left:348px;top:344px" width="6" height="6"><path d="M0 0H5L0 5Z" fill="#217346"/></svg>
<div class="abs ct" style="left:32px;top:364px">007</div>
<div class="abs ct" style="left:138px;top:364px">李十一</div>
<div class="abs ct" style="left:244px;top:364px">女</div>
<div class="abs ct" style="left:350px;top:364px">23</div>
<div class="abs ct" style="left:456px;top:364px">后勤保障部</div>
<svg class="abs" style="left:31px;top:363px" width="6" height="6"><path d="M0 0H5L0 5Z" fill="#217346"/></svg>
<svg class="abs" style="left:348px;top:363px" width="6" height="6"><path d="M0 0H5L0 5Z" fill="#217346"/></svg>
<div class="abs ct" style="left:32px;top:383px">008</div>
<div class="abs ct" style="left:138px;top:383px">周十二</div>
<div class="abs ct" style="left:244px;top:383px">男</div>
<div class="abs ct" style="left:350px;top:383px">22</div>
<div class="abs ct" style="left:456px;top:383px">销售部</div>
<svg class="abs" style="left:31px;top:382px" width="6" height="6"><path d="M0 0H5L0 5Z" fill="#217346"/></svg>
<svg class="abs" style="left:348px;top:382px" width="6" height="6"><path d="M0 0H5L0 5Z" fill="#217346"/></svg>
<div class="abs ct" style="left:32px;top:402px">009</div>
<div class="abs ct" style="left:138px;top:402px">慕容十三</div>
<div class="abs ct" style="left:244px;top:402px">男</div>
<div class="abs ct" style="left:350px;top:402px">18</div>
<div class="abs ct" style="left:456px;top:402px">销售部</div>
<svg class="abs" style="left:31px;top:401px" width="6" height="6"><path d="M0 0H5L0 5Z" fill="#217346"/></svg>
<svg class="abs" style="left:348px;top:401px" width="6" height="6"><path d="M0 0H5L0 5Z" fill="#217346"/></svg>
<div class="abs ct" style="left:32px;top:421px">010</div>
<div class="abs ct" style="left:138px;top:421px">吴十四</div>
<div class="abs ct" style="left:244px;top:421px">男</div>
<div class="abs ct" style="left:350px;top:421px">21</div>
<div class="abs ct" style="left:456px;top:421px">销售部</div>
<svg class="abs" style="left:31px;top:420px" width="6" height="6"><path d="M0 0H5L0 5Z" fill="#217346"/></svg>
<svg class="abs" style="left:348px;top:420px" width="6" height="6"><path d="M0 0H5L0 5Z" fill="#217346"/></svg>
<div class="abs ct" style="left:32px;top:440px">011</div>
<div class="abs ct" style="left:138px;top:440px">郑十五</div>
<div class="abs ct" style="left:244px;top:440px">女</div>
<div class="abs ct" style="left:350px;top:440px">25</div>
<div class="abs ct" style="left:456px;top:440px">广告部</div>
<svg class="abs" style="left:31px;top:439px" width="6" height="6"><path d="M0 0H5L0 5Z" fill="#217346"/></svg>
<svg class="abs" style="left:348px;top:439px" width="6" height="6"><path d="M0 0H5L0 5Z" fill="#217346"/></svg>
<div class="abs ct" style="left:32px;top:459px">012</div>
<div class="abs ct" style="left:138px;top:459px">王十六</div>
<div class="abs ct" style="left:244px;top:459px">女</div>
<div class="abs ct" style="left:350px;top:459px">27</div>
<div class="abs ct" style="left:456px;top:459px">广告部</div>
<svg class="abs" style="left:31px;top:458px" width="6" height="6"><path d="M0 0H5L0 5Z" fill="#217346"/></svg>
<svg class="abs" style="left:348px;top:458px" width="6" height="6"><path d="M0 0H5L0 5Z" fill="#217346"/></svg>
<div class="abs" style="left:30px;top:230px;width:529px;height:1px;background:#fff"></div>
<div class="abs" style="left:30px;top:230px;width:1px;height:252px;background:#fff"></div>
<div class="abs" style="left:558px;top:230px;width:1px;height:252px;background:#fff"></div>
<div class="abs" style="left:28px;top:228px;width:533px;height:2px;background:#217346"></div>
<div class="abs" style="left:28px;top:228px;width:2px;height:254px;background:#217346"></div>
<div class="abs" style="left:559px;top:228px;width:2px;height:254px;background:#217346"></div>
<div class="abs" style="left:556px;top:230px;width:6px;height:5px;background:#fff"></div>
<div class="abs" style="left:557px;top:228px;width:5px;height:6px;background:#217346"></div>
<div class="abs" style="left:661px;top:228px;width:15px;height:240px;background:#dcdcdc"></div>
<div class="abs" style="left:661px;top:227px;width:15px;height:157px;background:#fff;border:1px solid #ababab;box-sizing:border-box"></div>
<svg class="abs" style="left:661px;top:213px" width="15" height="15"><rect x=".5" y=".5" width="14" height="14" fill="#fff" stroke="#c6c6c6"/><path d="M4.500 9.500L7.500 6L10.500 9.500Z" fill="#6a6a6a"/></svg>
<svg class="abs" style="left:661px;top:468px" width="15" height="15"><rect x=".5" y=".5" width="14" height="14" fill="#fff" stroke="#c6c6c6"/><path d="M4 5.500L7.500 9.500L11 5.500Z" fill="#777"/></svg>
</div><!-- sheet tab bar -->
<div class="abs" style="left:1px;top:482px;width:678px;height:28px;background:#e6e6e6"></div>
<svg class="abs" style="left:26px;top:490px" width="40" height="12"><path d="M6 1.500v8l-4.300-4z" fill="#bdbdbd"/><path d="M31 1.500v8l4.300-4z" fill="#bdbdbd"/></svg>
<div class="abs" style="left:101px;top:482px;width:69px;height:24px;background:#fff;border-left:1px solid #ababab;border-right:1px solid #ababab;box-sizing:border-box"></div>
<div class="abs" style="left:101px;top:505px;width:69px;height:2px;background:#217346"></div>
<div class="rl" style="left:114px;top:486px;font-size:13.500px;line-height:17px;color:#217346;letter-spacing:-0.2px">Sheet1</div>
<svg class="abs" style="left:202px;top:487px" width="18" height="18" fill="none" stroke="#777"><circle cx="8.500" cy="8.500" r="7.300" stroke-width="1.200"/><path d="M8.500 4.500v8M4.500 8.500h8" stroke-width="2" stroke="#6a6a6a"/></svg>
<svg class="abs" style="left:407px;top:489px" width="4" height="14" fill="#9a9a9a"><rect x="1" y="1.500" width="2" height="2"/><rect x="1" y="6" width="2" height="2"/><rect x="1" y="10.500" width="2" height="2"/></svg>
<svg class="abs" style="left:425px;top:489px" width="15" height="15"><rect x=".5" y=".5" width="14" height="14" fill="#fff" stroke="#c6c6c6"/><path d="M9.500 4L5.500 7.500L9.500 11Z" fill="#777"/></svg>
<div class="abs" style="left:440px;top:489px;width:204px;height:15px;background:#dadada"></div><div class="abs" style="left:441px;top:489px;width:194px;height:15px;background:#fff;border:1px solid #c6c6c6;box-sizing:border-box"></div>
<svg class="abs" style="left:643px;top:489px" width="15" height="15"><rect x=".5" y=".5" width="14" height="14" fill="#fff" stroke="#c6c6c6"/><path d="M5.500 4L9.500 7.500L5.500 11Z" fill="#777"/></svg>
<!-- status bar -->
<div class="abs" style="left:1px;top:510px;width:678px;height:1px;background:#c8c8c8"></div>
<div class="abs" style="left:1px;top:511px;width:678px;height:21px;background:#f1f1f1"></div>
<div class="rl" style="left:9px;top:513.500px;color:#555">就绪</div>
<svg class="abs" style="left:50px;top:512px" width="18" height="18" viewBox="50 512 18 18">
 <path d="M53.600 518v8.400h10.800v-10.800h-6" fill="#fff" stroke="#6e6e6e" stroke-width="1.200"/>
 <rect x="59" y="515" width="6" height="2.600" fill="#6e6e6e"/>
 <circle cx="55" cy="516.800" r="3.300" fill="#7a7a7a"/>
 <g fill="#6e6e6e"><rect x="58.200" y="520" width="1.800" height="1"/><rect x="61.200" y="520" width="1.800" height="1"/>
 <rect x="55.200" y="522" width="1.800" height="1"/><rect x="58.200" y="522" width="1.800" height="1"/><rect x="61.200" y="522" width="1.800" height="1"/>
 <rect x="55.200" y="524" width="1.800" height="1"/><rect x="58.200" y="524" width="1.800" height="1"/><rect x="61.200" y="524" width="1.800" height="1"/></g>
</svg>
<div class="rl" style="left:308px;top:513px;color:#444">计数: 65</div>
<div class="abs" style="left:371px;top:511px;width:38px;height:20px;background:#c8c8c8"></div>
<svg class="abs" style="left:383px;top:514px" width="14" height="14" fill="none" stroke="#666"><path d="M.5 .5h12v12h-12zM4.500 .5v12M8.500 .5v12M.5 4.500h12M.5 8.500h12"/></svg>
<svg class="abs" style="left:421px;top:514px" width="14" height="14" fill="none" stroke="#555"><path d="M.5 .5h12v12h-12zM3.500 2.500h6v8h-6z"/><path d="M5 4.500h3M5 6.500h3M5 8.500h3" stroke="#777"/></svg>
<div class="rl" style="left:629px;top:513px;color:#444">100%</div>
<div class="rl" style="left:640px;top:508.500px;font-size:13.500px;font-style:italic;font-weight:bold;color:#cdcdcd;text-shadow:1px 1px 1px #a0a0a0">m.cn</div>
<!-- watermark -->
<svg class="abs" style="left:440px;top:455px" width="210" height="78" viewBox="440 455 210 78">
 <text x="454.600" y="499.500" textLength="180.500" lengthAdjust="spacingAndGlyphs" font-family="Noto Sans CJK SC, sans-serif" font-weight="900" font-size="36" fill="#2ec46d" stroke="#2ec46d" stroke-width=".8" stroke-linejoin="round">技术员联盟</text>
 <rect x="453.500" y="507.500" width="182.500" height="20.500" rx="8" fill="#2ec46d"/>
 <text x="470" y="523" textLength="146" lengthAdjust="spacing" font-family="Liberation Sans, sans-serif" font-weight="bold" font-size="16.500" fill="#fff" stroke="#fff" stroke-width=".3">www.jsgho.com</text>
</svg>
<div class="abs" style="left:0;top:532px;width:680px;height:1px;background:#217346"></div><div class="abs" style="left:0;top:531px;width:680px;height:1px;background:#217346;opacity:.4"></div>
</div>
</body>
</html>
